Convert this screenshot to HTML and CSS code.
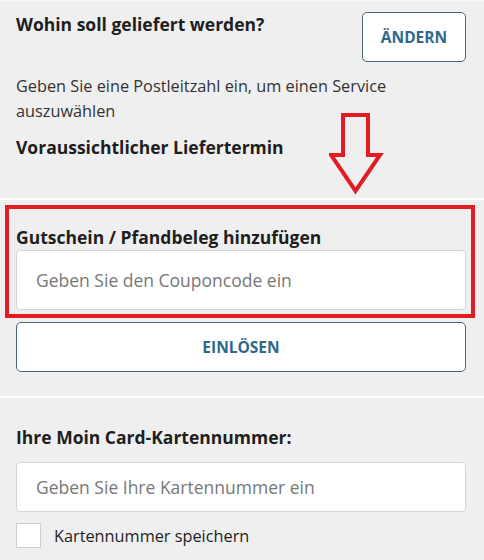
FILE: index.html
```html
<!DOCTYPE html>
<html lang="de">
<head>
<meta charset="utf-8">
<title>Lieferung</title>
<link rel="stylesheet" href="styles.css">
</head>
<body>
<div class="page">
  <section class="section delivery">
    <div class="delivery-head">
      <h2 class="title">Wohin soll geliefert werden?</h2>
      <button class="btn btn-small" type="button">ÄNDERN</button>
    </div>
    <p class="hint">Geben Sie eine Postleitzahl ein, um einen Service auszuwählen</p>
    <h3 class="title sub">Voraussichtlicher Liefertermin</h3>
  </section>

  <section class="section coupon">
    <h2 class="title">Gutschein / Pfandbeleg hinzufügen</h2>
    <input class="field field-tall" type="text" placeholder="Geben Sie den Couponcode ein">
    <button class="btn btn-wide" type="button">EINLÖSEN</button>
    <div class="highlight-box"></div>
  </section>

  <section class="section card">
    <h2 class="title">Ihre Moin Card-Kartennummer:</h2>
    <input class="field" type="text" placeholder="Geben Sie Ihre Kartennummer ein">
    <label class="check">
      <span class="check-box"></span>
      <span class="check-label">Kartennummer speichern</span>
    </label>
  </section>

  <svg class="arrow" width="60" height="90" viewBox="0 0 60 90" aria-hidden="true">
    <path d="M14 2 H39 V42 H51 L26.5 78 L2 42 H14 Z" fill="none" stroke="#e31b23" stroke-width="4" stroke-linejoin="miter"/>
  </svg>
</div>
</body>
</html>
```

FILE: styles.css
```css
* { box-sizing: border-box; }

html, body {
  margin: 0;
  padding: 0;
  background: #efefef;
}

body {
  font-family: "Open Sans", "Noto Sans", Arial, sans-serif;
  color: #1e1e1e;
  width: 484px;
  height: 560px;
  overflow: hidden;
}

.page {
  position: relative;
  border-top: 1px solid #f8f8f8;
}

.section {
  position: relative;
  padding: 0 18px 0 16px;
}

.section + .section {
  border-top: 2px solid #ffffff;
}

.title {
  margin: 0;
  font-size: 17.5px;
  line-height: 24px;
  font-weight: 700;
  color: #1e1e1e;
}

.delivery {
  padding-top: 11px;
  height: 197px;
}

.delivery-head {
  display: flex;
  justify-content: space-between;
  align-items: flex-start;
}

.hint {
  margin: 12px 0 0;
  font-size: 16.3px;
  line-height: 25px;
  color: #333333;
}

.sub {
  margin-top: 11px;
}

.btn {
  display: flex;
  align-items: center;
  justify-content: center;
  background: #ffffff;
  border: 1px solid #4a6677;
  border-radius: 5px;
  color: #2f6889;
  font-family: "Open Sans", "Noto Sans", Arial, sans-serif;
  font-weight: 700;
  font-size: 15.5px;
  padding: 0;
  cursor: pointer;
}

.btn-small {
  width: 104px;
  height: 50px;
  flex: none;
}

.btn-wide {
  width: 450px;
  height: 50px;
  margin-top: 12px;
}

.coupon {
  padding-top: 25px;
  padding-bottom: 24px;
}

.field {
  display: block;
  width: 450px;
  height: 50px;
  margin-top: 13px;
  padding: 0 19px;
  background: #ffffff;
  border: 1px solid #d6d6d6;
  border-radius: 4px;
  font-family: "Open Sans", "Noto Sans", Arial, sans-serif;
  font-size: 17.5px;
  color: #333333;
  outline: none;
}

.field::placeholder {
  color: #777777;
  opacity: 1;
}

.field-tall {
  height: 60px;
  margin-top: 1px;
}

.highlight-box {
  position: absolute;
  left: 5px;
  top: 5px;
  width: 470px;
  height: 113px;
  border: 4px solid #e31b23;
  pointer-events: none;
}

.card {
  padding-top: 27px;
}

.check {
  display: flex;
  align-items: center;
  gap: 13px;
  margin-top: 11px;
}

.check-box {
  width: 25px;
  height: 25px;
  background: #ffffff;
  border: 1px solid #cfcfcf;
  flex: none;
}

.check-label {
  font-size: 16.3px;
  line-height: 24px;
  color: #1e1e1e;
}

.arrow {
  position: absolute;
  left: 329px;
  top: 112px;
}
```
